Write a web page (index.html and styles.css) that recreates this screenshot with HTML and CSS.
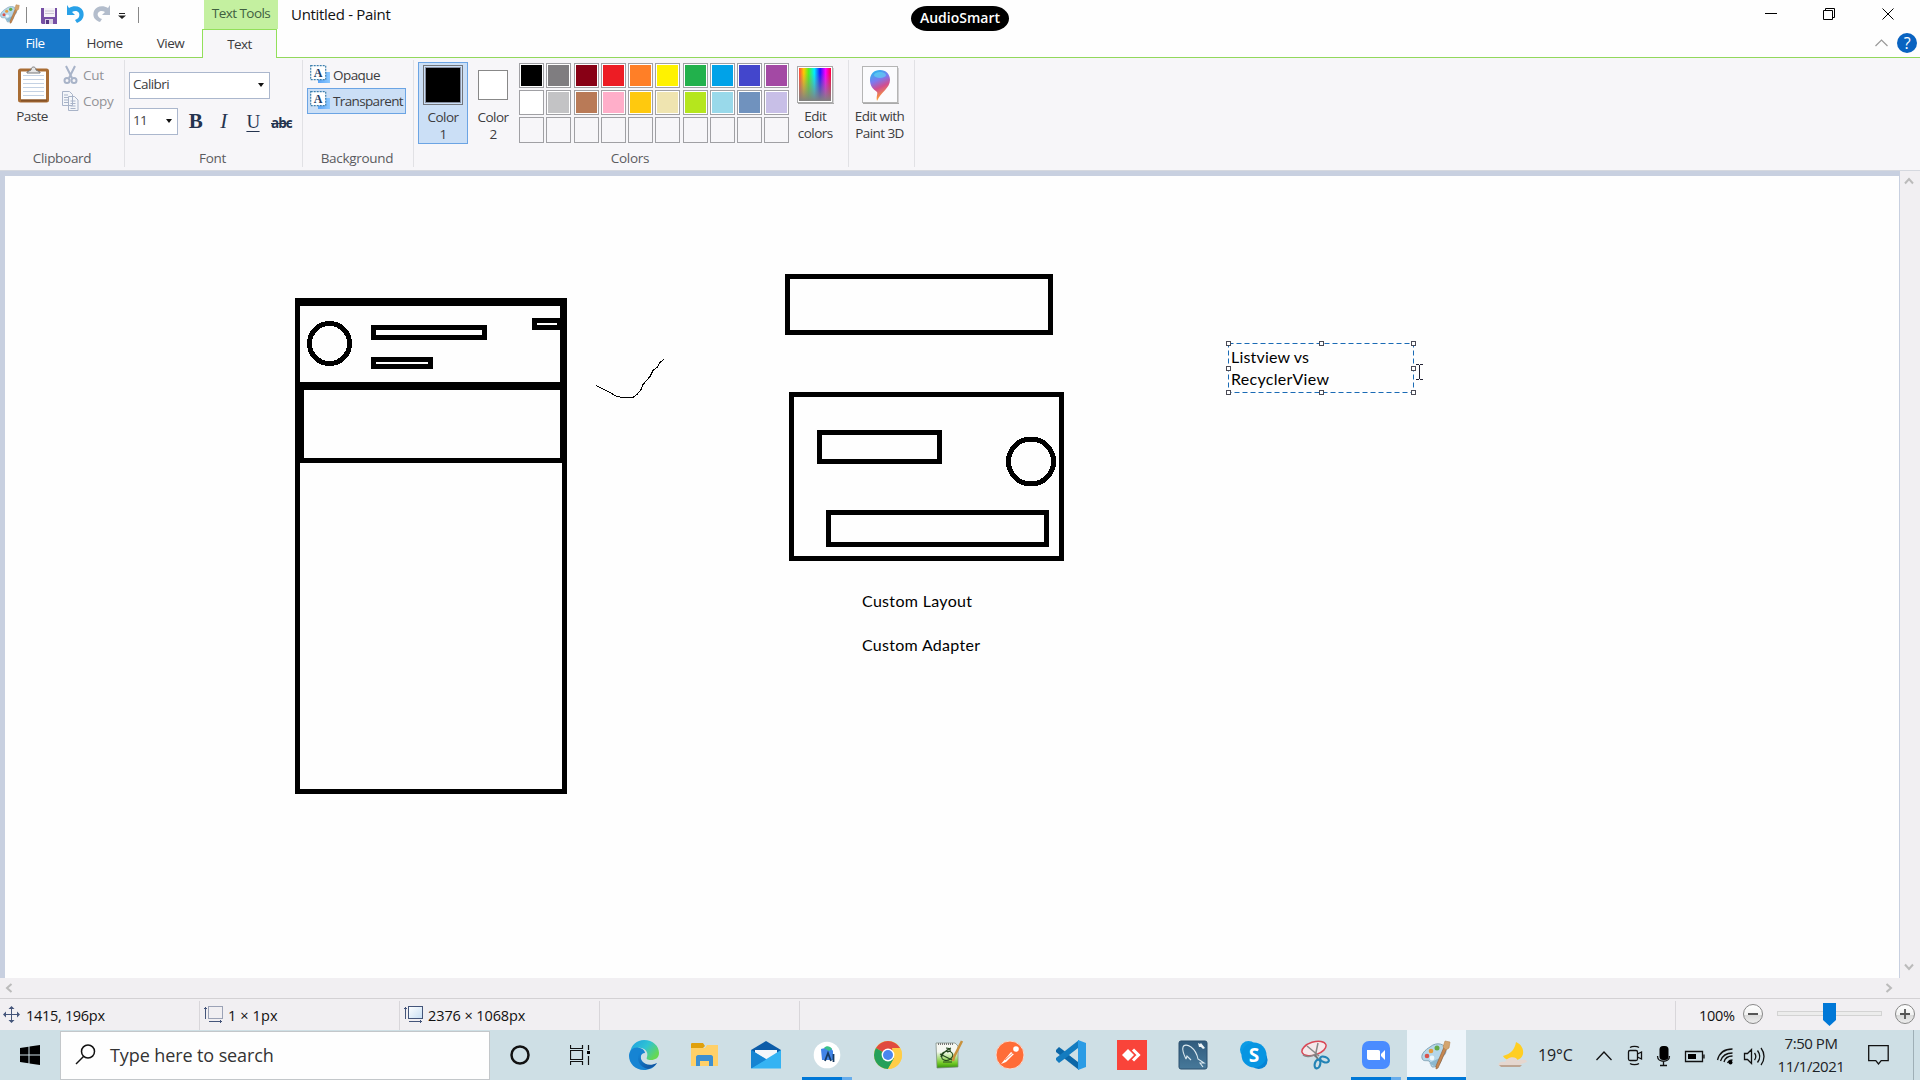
FILE: index.html
```html
<!DOCTYPE html>
<html lang="en">
<head>
<meta charset="utf-8">
<title>Untitled - Paint</title>
<link rel="stylesheet" href="styles.css">
</head>
<body>
<svg class="defs" width="0" height="0" aria-hidden="true">
  <defs>
    <symbol id="palette" viewBox="0 0 30 30">
      <path d="M9 7C16 1 25 4 25 11c0 4-3 4-4 7-1 5-4 9-9 9-3 0-1-4-4-6-3-1-6 1-7-3C0 14 4 10 9 7z" fill="#b5d7ea" stroke="#83a5b7"/>
      <path d="M8 23l5 3c5 0 7-5 8-9z" fill="#8db8ce"/>
      <circle cx="6" cy="16" r="2.3" fill="#d9544d"/><circle cx="10" cy="11" r="2.3" fill="#e79b3b"/>
      <circle cx="16" cy="8" r="2.5" fill="#65aa47"/><circle cx="11" cy="18" r="2.4" fill="#eef8fc"/>
      <path d="M26 8L17 28l-2 1 0-3 8-19z" fill="#c78850" stroke="#925a30" stroke-width=".6"/>
      <path d="M22 7l2-6 5 1-1 6-3 2z" fill="#d4a56f" stroke="#b98753" stroke-width=".6"/>
    </symbol>
    <symbol id="textbg" viewBox="0 0 20 20">
      <defs><linearGradient id="bl"><stop stop-color="#5aa4f7"/><stop offset="1" stop-color="#8cc9ff"/></linearGradient></defs>
      <rect x="8" y="7" width="12" height="11" fill="url(#bl)"/>
      <rect x=".7" y=".7" width="15" height="14" fill="#fff" stroke="#3e80ae" stroke-width="1.2" stroke-dasharray="2 1"/>
      <text x="8" y="12" class="glyph" text-anchor="middle">A</text>
    </symbol>
    <linearGradient id="spectrum"><stop stop-color="#f44"/><stop offset=".15" stop-color="#fc0"/><stop offset=".3" stop-color="#5e2"/><stop offset=".48" stop-color="#0ef"/><stop offset=".66" stop-color="#21f"/><stop offset=".83" stop-color="#f0f"/><stop offset="1" stop-color="#f03"/></linearGradient>
    <linearGradient id="grayfade" x2="0" y2="1"><stop offset=".15" stop-color="#888" stop-opacity="0"/><stop offset="1" stop-color="#808080"/></linearGradient>
    <linearGradient id="pin" x2=".3" y2="1"><stop stop-color="#18c4ee"/><stop offset=".4" stop-color="#7c79ef"/><stop offset=".65" stop-color="#d14d91"/><stop offset="1" stop-color="#ffa32c"/></linearGradient>
    <linearGradient id="edgeg" x2="1" y2=".6"><stop stop-color="#1d9de2"/><stop offset=".55" stop-color="#2fc3d4"/><stop offset="1" stop-color="#66d853"/></linearGradient>
    <linearGradient id="edgeb" x2="1" y2="1"><stop stop-color="#1287d8"/><stop offset="1" stop-color="#114a95"/></linearGradient>
    <linearGradient id="knob" x2="0" y2="1"><stop stop-color="#fff"/><stop offset=".55" stop-color="#f1f1f1"/><stop offset=".56" stop-color="#d9d9d9"/><stop offset="1" stop-color="#eee"/></linearGradient>
    <linearGradient id="page" x2="1" y2="1"><stop stop-color="#fff"/><stop offset="1" stop-color="#c7def3"/></linearGradient>
    <linearGradient id="npp" x2="0" y2="1"><stop offset=".35" stop-color="#f6f8f2"/><stop offset=".8" stop-color="#73cb25"/><stop offset="1" stop-color="#34930f"/></linearGradient>
    <linearGradient id="sea" x2="0" y2="1"><stop stop-color="#315b7d"/><stop offset="1" stop-color="#47799a"/></linearGradient>
  </defs>
</svg>

<header class="titlebar">
  <div class="quick">
    <svg class="q-palette" width="20" height="20"><use href="#palette"/></svg>
    <i class="q-sep"></i>
    <svg class="q-save" width="16" height="16" viewBox="0 0 16 16"><path d="M0 0h16v16H1l-1-1z" fill="#7650a5"/><path d="M3 0h11v9H3z" fill="#f5f2f7"/><path d="M4 3h9M4 5.5h9" stroke="#c9c4d2"/><path d="M4 11h8v5H4z" fill="#d9d1e3"/><path d="M5 12h3v4H5z" fill="#583884"/></svg>
    <svg class="q-undo" width="17" height="18" viewBox="0 0 17 18"><path d="M0 0l2 3c5-3 12-2 14 3 2 6-1 10-6 12l-2-3c4-1 5-4 4-7-2-3-5-2-7-1l3 3H0z" fill="#28a1e8"/></svg>
    <svg class="q-redo" width="17" height="18" viewBox="0 0 17 18"><path d="M17 0l-2 3C10 0 3 1 1 6c-2 6 1 9 6 11l2-3C5 13 4 10 5 8c2-3 5-2 7-1L9 10h8z" fill="#b3bdcc"/></svg>
    <svg class="q-more" width="8" height="6" viewBox="0 0 8 6"><path d="M1 .5h6" stroke="#222"/><path d="M0 2.5h8L4 6z" fill="#222"/></svg>
    <i class="q-sep"></i>
  </div>
  <div class="tools-tab">Text Tools</div>
  <div class="title">Untitled - Paint</div>
  <svg class="win-btns" width="130" height="14" viewBox="0 0 130 14"><g fill="none" stroke="#000"><path d="M0 6.5h12M58.500 3.500h9v9h-9zM60.500 3v-1.500h9v9h-1.500M117.500 1.500l11 11M128.500 1.500l-11 11"/></g></svg>
  <div class="pill">AudioSmart</div>
</header>

<nav class="tabs">
  <a class="tab file">File</a><a class="tab home">Home</a><a class="tab view">View</a><a class="tab text">Text</a>
  <div class="tab-fill">
    <svg width="13" height="8" viewBox="0 0 13 8"><path d="M.5 7l6-6 6 6" fill="none" stroke="#999" stroke-width="1.200"/></svg>
    <span class="help">?</span>
  </div>
</nav>

<section class="ribbon">
  <div class="group clipboard">
    <div class="body">
      <div class="paste">
        <svg width="31" height="37" viewBox="0 0 31 37"><rect x="1.500" y="4" width="28" height="31" rx="1" fill="#fff" stroke="#a96d35" stroke-width="3"/><path d="M3 34.500h26" stroke="#865329" stroke-width="2"/><path d="M5 9.500h21M5 13.500h21M5 17.500h21M5 21.500h21M5 25.500h21M5 29.500h21" stroke="#c4d2e4"/><path d="M9 6l4-2c0-4 5-4 5 0l4 2v1H9z" fill="#e5e5e5" stroke="#777"/></svg>
        <span>Paste</span>
      </div>
      <div class="cutcopy">
        <div class="row"><svg width="17" height="20" viewBox="0 0 17 20"><g fill="none" stroke="#a8b3c8" stroke-width="2"><path d="M4 1l6 12M13 1L7 13"/><circle cx="5" cy="15.500" r="2.500"/><circle cx="12" cy="15.500" r="2.500"/></g></svg><span>Cut</span></div>
        <div class="row"><svg width="17" height="20" viewBox="0 0 17 20"><g fill="#f4f6fa" stroke="#a8b3c8"><path d="M.5.5h7l3 3v11H.5zM6.500 5.500h6l3.500 3.500v10.500H6.500z"/><path d="M2 4h4M2 6.500h4M2 9h4M2 11.500h4M8.500 10h5M8.500 12.500h5M8.500 15h5M8.500 17.500h5"/></g></svg><span>Copy</span></div>
      </div>
    </div>
    <div class="caption">Clipboard</div>
  </div>

  <div class="group font">
    <div class="body">
      <div class="combo">Calibri<i></i></div>
      <div class="font-row">
        <div class="combo small">11<i></i></div>
        <b class="f-b">B</b><em class="f-i">I</em><u class="f-u">U</u><s class="f-s">abc</s>
      </div>
    </div>
    <div class="caption">Font</div>
  </div>

  <div class="group background">
    <div class="body">
      <div class="opt"><svg width="20" height="20"><use href="#textbg"/></svg>Opaque</div>
      <div class="opt on"><svg width="20" height="20"><use href="#textbg"/></svg>Transparent</div>
    </div>
    <div class="caption">Background</div>
  </div>

  <div class="group colors">
    <div class="body">
      <div class="slot on"><i class="big"></i>Color<br>1</div>
      <div class="slot second"><i class="big"></i>Color<br>2</div>
      <div class="swatches">
        <i class="c-black"></i><i class="c-gray"></i><i class="c-maroon"></i><i class="c-red"></i><i class="c-orange"></i><i class="c-yellow"></i><i class="c-green"></i><i class="c-sky"></i><i class="c-indigo"></i><i class="c-purple"></i>
        <i class="c-white"></i><i class="c-silver"></i><i class="c-brown"></i><i class="c-pink"></i><i class="c-gold"></i><i class="c-cream"></i><i class="c-lime"></i><i class="c-aqua"></i><i class="c-steel"></i><i class="c-lilac"></i>
        <i></i><i></i><i></i><i></i><i></i><i></i><i></i><i></i><i></i><i></i>
      </div>
      <div class="bigbtn edit">
        <svg width="37" height="38" viewBox="0 0 37 38"><rect x=".5" y=".5" width="35" height="36" fill="#fff" stroke="#a9a9a9"/><path d="M1 37.500h36V2" fill="none" stroke="#aaa"/><path d="M2 2h32v33H2z" fill="url(#spectrum)"/><path d="M2 2h32v33H2z" fill="url(#grayfade)"/></svg>
        <span>Edit<br>colors</span>
      </div>
    </div>
    <div class="caption">Colors</div>
  </div>

  <div class="group p3d">
    <div class="bigbtn">
      <svg width="37" height="38" viewBox="0 0 37 38"><rect x=".5" y=".5" width="35" height="36" fill="#fbfbfd" stroke="#b5b5b5"/><path d="M1 37.500h36V2" fill="none" stroke="#aaa"/><path d="M18 4c6 0 10 4 10 10 0 8-9 12-13 21-1-5 1-7 0-9-4-3-7-6-7-12S12 4 18 4z" fill="url(#pin)"/><ellipse cx="18" cy="9" rx="6" ry="3" fill="#5fdcf2" opacity=".6"/></svg>
      <span>Edit with<br>Paint 3D</span>
    </div>
  </div>
</section>

<main class="work">
  <svg class="canvas" width="1894" height="802" viewBox="5 176 1894 802">
    <g fill="#000" shape-rendering="crispEdges">
      <path d="M295 298h272v8H295zM295 298h5v496h-5zM560 298h7v165h-7zM562 463h5v331h-5zM295 789h272v5H295zM300 382h262v8H300zM300 388h4v72h-4zM295 458h272v5H295z"/>
    </g>
    <g fill="none" stroke="#000" stroke-width="5" shape-rendering="crispEdges">
      <rect x="373.500" y="327.500" width="111" height="10"/>
      <rect x="373.500" y="359.500" width="57" height="7"/>
      <rect x="534.500" y="320.500" width="25" height="7"/>
      <rect x="787.500" y="276.500" width="263" height="56"/>
      <rect x="791.500" y="394.500" width="270" height="164"/>
      <rect x="819.500" y="432.500" width="120" height="29"/>
      <rect x="828.500" y="512.500" width="218" height="32"/>
      <circle cx="329.500" cy="343.500" r="20"/>
      <circle cx="1031" cy="461.500" r="22.500"/>
    </g>
    <path d="M596 385.500l6 3 6 3 9 5 6 1h10l4-3 4-5 2-5 7-8 3-6 4-3 3-5 4-3" fill="none" stroke="#000" shape-rendering="crispEdges"/>
    <g class="ink">
      <text x="862" y="607" textLength="110">Custom Layout</text>
      <text x="862" y="651" textLength="118">Custom Adapter</text>
      <text x="1231" y="363" textLength="78">Listview vs</text>
      <text x="1231" y="385" textLength="98">RecyclerView</text>
    </g>
    <rect x="1228.500" y="343.500" width="185" height="49" fill="none" stroke="#1a6bb5" stroke-dasharray="5 3"/>
    <g fill="#fff" stroke="#4a4a55" shape-rendering="crispEdges">
      <path d="M1226.500 341.500h4v4h-4zM1319.500 341.500h4v4h-4zM1411.500 341.500h4v4h-4zM1226.500 366.500h4v4h-4zM1411.500 366.500h4v4h-4zM1226.500 390.500h4v4h-4zM1319.500 390.500h4v4h-4zM1411.500 390.500h4v4h-4z"/>
    </g>
    <path d="M1416 364.500h3M1420 364.500h3M1416 379.500h3M1420 379.500h3M1419.500 365v14" fill="none" stroke="#223"/>
  </svg>
  <div class="vscroll">
    <svg width="10" height="8" viewBox="0 0 10 8"><path d="M1 6.500l4-4.500 4 4.500" fill="none" stroke="#bbb" stroke-width="2"/></svg>
    <svg width="10" height="8" viewBox="0 0 10 8"><path d="M1 1.500L5 6l4-4.500" fill="none" stroke="#bbb" stroke-width="2"/></svg>
  </div>
</main>
<div class="hscroll">
  <svg width="8" height="10" viewBox="0 0 8 10"><path d="M6.500 1L2 5l4.500 4" fill="none" stroke="#bbb" stroke-width="2"/></svg>
  <svg width="8" height="10" viewBox="0 0 8 10"><path d="M1.500 1L6 5 1.500 9" fill="none" stroke="#bbb" stroke-width="2"/></svg>
</div>

<footer class="status">
  <div class="cell"><svg width="17" height="17" viewBox="0 0 17 17"><g stroke="#44557a" fill="#44557a"><path d="M8.500 1v15M1 8.500h15" fill="none"/><path stroke="none" d="M8.500 0l3 3h-6zM8.500 17l3-3h-6zM0 8.500l3-3v6zM17 8.500l-3-3v6z"/></g></svg><span class="st-pos">1415, 196px</span></div>
  <div class="cell"><svg width="19" height="17" viewBox="0 0 19 17"><g fill="none" stroke="#44557a"><path d="M1.500 1v12M5 15.500h13"/><path d="M0 2.500h3M16.500 14v3"/><rect x="4.500" y=".5" width="14" height="12" stroke-dasharray="1 1"/></g></svg><span class="st-sel">1 × 1px</span></div>
  <div class="cell"><svg width="19" height="17" viewBox="0 0 19 17"><g fill="none" stroke="#44557a"><path d="M1.500 1v12M5 15.500h13M0 2.500h3M16.500 14v3"/><rect x="4.500" y=".5" width="14" height="12" fill="url(#page)"/></g></svg><span class="st-size">2376 × 1068px</span></div>
  <div class="cell"></div>
  <div class="cell grow"></div>
  <div class="zoom">
    <span>100%</span>
    <svg width="174" height="26" viewBox="0 0 174 26">
      <rect x="35.500" y="9.500" width="104" height="4" fill="#ececec" stroke="#d3d3d3"/>
      <path d="M81 1h13v17l-6.500 6L81 18z" fill="#0078d7"/>
      <g stroke="#888" fill="url(#knob)"><circle cx="11" cy="12" r="9.500"/><circle cx="163" cy="12" r="9.500"/></g>
      <path d="M6 12h10M158 12h10M163 7v10" stroke="#555" stroke-width="1.800"/>
    </svg>
  </div>
</footer>

<footer class="taskbar">
  <div class="start"><svg width="20" height="20" viewBox="0 0 20 20"><path d="M0 3l8.500-1.200v7.700H0zM9.500 1.600L20 0v9.500H9.500zM0 10.500h8.500v7.700L0 17zM9.500 10.500H20V20L9.500 18.400z"/></svg></div>
  <div class="search"><svg width="21" height="21" viewBox="0 0 21 21"><g fill="none" stroke="#111" stroke-width="1.500"><circle cx="13" cy="7.500" r="6.500"/><path d="M8.500 12.500L1 20"/></g></svg><span>Type here to search</span></div>
  <div class="app sys"><svg width="22" height="22" viewBox="0 0 22 22"><circle cx="11" cy="11" r="8.500" fill="none" stroke="#111" stroke-width="2.500"/></svg></div>
  <div class="app sys tv"><svg width="21" height="20" viewBox="0 0 21 20"><path d="M.5 0v3.500h12V0M.5 20v-3.500h12V20M.5 5.500h12v9H.5zM18.500 0v5M18.500 11v9" fill="none" stroke="#111" stroke-width="1.200"/><path d="M17 6h3v3h-3z"/></svg></div>
  <div class="app"><svg width="30" height="30" viewBox="0 0 30 30"><path d="M1 13C2 5 8 0 15 0c9 0 15 6 15 13 0 5-4 7-8 7-4 0-5-1-4-3 2-6-4-10-9-9-4 0-7 2-8 5z" fill="url(#edgeg)"/><path d="M0 16C0 9 6 6 11 8c4 1 5 4 5 5-5 0-5 6-3 9 3 4 9 5 15 1-3 5-8 7-13 7C6 30 0 23 0 16z" fill="#1684d3"/><path d="M10 13c-3 6 0 14 9 16 4-1 7-3 9-6-6 3-12 2-15-2-2-3-2-6 0-8z" fill="url(#edgeb)"/></svg></div>
  <div class="app"><svg width="30" height="30" viewBox="0 0 30 30"><path d="M1 4c0-1 1-1 1-1h11l2 3-2 2H1z" fill="#e0a00c"/><path d="M1 8h14l2-3h11v21H1z" fill="#ffd068"/><path d="M6 26v-9c0-1 1-2 2-2h13c1 0 2 1 2 2v9h-4v-5h-9v5z" fill="#3c8fd1"/></svg></div>
  <div class="app"><svg width="30" height="30" viewBox="0 0 30 30"><path d="M0 10L15 1l15 9v5H0z" fill="#0c5ca8"/><path d="M4 10h22v10H4z" fill="#f4f6fa"/><path d="M0 10l20 12 10 6H0z" fill="#1291df"/><path d="M30 10L0 28.500h30z" fill="#35b3f3"/><path d="M0 10l15 9.500L0 28.500z" fill="#1684d2"/></svg></div>
  <div class="app run"><svg width="28" height="28" viewBox="0 0 28 28"><circle cx="14" cy="14" r="13.300" fill="#fff"/><path d="M8 8l4-1h6l2 3v9H9z" fill="#4285e8"/><path d="M11 7c2-2.500 6-2.500 8 1l-3 2z" fill="#39c08a"/><path d="M12 20l3-8 3 8M20.500 13v8" fill="none" stroke="#173b62" stroke-width="1.800"/></svg></div>
  <div class="app"><svg width="28" height="28" viewBox="0 0 28 28"><circle cx="14" cy="14" r="14" fill="#ffcd46"/><path d="M14 14L1.900 7A14 14 0 0 1 26.100 7z" fill="#e04a3f"/><path d="M14 14L1.900 7A14 14 0 0 0 14 28l6-10.500z" fill="#25a05a"/><path d="M26.100 7A14 14 0 0 1 14 28l6-10.500-2-10.500z" fill="#ffcd46"/><circle cx="14" cy="14" r="6.400" fill="#fff"/><circle cx="14" cy="14" r="5" fill="#4a86ef"/></svg></div>
  <div class="app"><svg width="30" height="30" viewBox="0 0 30 30"><path d="M2 3h19l3 3v21L3 28z" fill="url(#npp)" stroke="#78867b" stroke-width=".7"/><path d="M4 4h16" stroke="#777" stroke-dasharray="1 1" stroke-width="2"/><path d="M7 17c0-5 8-8 11-4s-4 9-8 7c-6-2 1-10 7-12M6 14l12 6M12 8c5 0 6 4 1 4M9 22h9" fill="none" stroke="#24471d" stroke-width="1.100"/><path d="M28 1l-8 16-1 4" fill="none" stroke="#c9923d" stroke-width="2.500"/></svg></div>
  <div class="app"><svg width="30" height="30" viewBox="0 0 30 30"><circle cx="15" cy="15" r="14" fill="#ff6c37" stroke="#f6d9cf" stroke-width="1"/><path d="M6 24l10-12 3 2-8 8z" fill="#fff"/><circle cx="21" cy="9" r="2.800" fill="#fff"/><path d="M10 20l9-8M18 13l3 3" stroke="#ff6c37" stroke-width=".8"/></svg></div>
  <div class="app"><svg width="30" height="30" viewBox="0 0 30 30"><path d="M0 10l3-3 20 15v8L0 12z" fill="#0b67a8"/><path d="M0 20l3 3L23 8V0L0 18z" fill="#147cc0"/><path d="M22 0l8 3v24l-8 3z" fill="#2b9ce5"/><path d="M22 8v14l-9-7z" fill="#cddfe5"/></svg></div>
  <div class="app"><svg width="30" height="30" viewBox="0 0 30 30"><path d="M0 0h30v30H0z" fill="#f9443a"/><path d="M5 15l6-6 6 6-6 6z" fill="#fff"/><path d="M16 9.500l5.500 5.500-5.500 5.500" fill="none" stroke="#fff" stroke-width="3"/></svg></div>
  <div class="app"><svg width="30" height="30" viewBox="0 0 30 30"><rect x="1" y="1" width="28" height="28" rx="2" fill="url(#sea)" stroke="#2c506e"/><path d="M8 19c-2-4-4-9-3-12 1-3 5-2 8 0 4 3 6 7 7 12l6 4-4 0 3 4M8 19l1-3 4 4" fill="none" stroke="#dce9ef" stroke-width="1.100"/><path d="M20 3l2 1 1-1 4 5-2 1-2-2-2 0z" fill="#eff5f7"/></svg></div>
  <div class="app"><svg width="30" height="30" viewBox="0 0 30 30"><rect x="1" y="1" width="17" height="17" rx="8.500" fill="#0c9be5"/><rect x="11" y="11" width="17.500" height="18" rx="8.500" fill="#0784d5"/><circle cx="15" cy="15" r="12.500" fill="#0795e2"/><text x="15" y="22" class="skype" text-anchor="middle">S</text></svg></div>
  <div class="app"><svg width="30" height="30" viewBox="0 0 30 30"><g fill="none"><ellipse cx="14" cy="8.500" rx="12.500" ry="6.500" transform="rotate(-18 14 8.500)" fill="#f5e9eb" stroke="#d94755" stroke-width="1.500"/><path d="M7 6l12 10M18 3l-3 14M3 15c4 3 10 1 14-2" stroke="#888" stroke-width="1.500"/><path d="M15 15l3 4" stroke="#777" stroke-width="2"/><ellipse cx="17.500" cy="24" rx="2.700" ry="4.500" transform="rotate(15 17.500 24)" stroke="#2283b5" stroke-width="2.200"/><ellipse cx="24.500" cy="19.500" rx="4.500" ry="2.600" transform="rotate(20 24.500 19.500)" stroke="#2283b5" stroke-width="2.200"/></g></svg></div>
  <div class="app run"><svg width="28" height="28" viewBox="0 0 28 28"><rect width="28" height="28" rx="7" fill="#4a8cff"/><path d="M5 9h11c2 0 2 1 2 2v8H8c-3 0-3-1-3-3zM19 13l4-4v10l-4-4z" fill="#fff"/></svg></div>
  <div class="app active"><svg width="30" height="30"><use href="#palette"/></svg></div>
  <div class="tray">
    <svg width="30" height="26" viewBox="0 0 30 26"><path d="M18 0c-1 7-5 12-13 14 3 6 18 7 20-2 1-5-2-10-7-12z" fill="#ffce22"/><path d="M1 24c-2-4 3-5 6-4 2-5 11-7 13-1 5-3 9-1 9 1-2 1-5 1-7 3z" fill="#e5d7cf"/><path d="M1 23h23l-2 2H3z" fill="#bda592"/></svg>
    <span class="temp">19°C</span>
    <svg class="t-glyphs" width="170" height="24" viewBox="1596 1042 170 24">
      <g fill="none" stroke="#111" stroke-width="1.300">
        <path d="M1597.500 1059l7.500-8 7.500 8"/>
        <rect x="1629.500" y="1049.500" width="9" height="10" rx="1.500"/><path d="M1638.500 1053l4-2v7l-4-2M1631 1046.500c2-1.500 7-1.500 9 0M1631 1062.500c2 1.500 7 1.500 9 0"/>
        <path d="M1658.500 1055c0 7 12 7 12 0M1664.500 1060v4M1661 1064.500h7"/>
        <path d="M1686.500 1050.500h17v10h-17zM1705 1053.500v4"/>
        <path d="M1718.500 1059c2-8 8-11 15-11M1721.500 1060c2-6 6-8 12-8M1725 1061c1-4 4-6 8.500-6M1728.500 1062c1-2 2-3 5-3"/>
        <path d="M1745.500 1052.500h3l4-4v14l-4-4h-3zM1755.500 1052c1.500 2 1.500 5 0 7M1758.500 1049.500c3 4 3 8 0 12M1762 1047c4 5 4 12 0 17"/>
      </g>
      <rect x="1660.500" y="1045" width="9" height="14" rx="3.500"/>
      <path d="M1689 1053h8v5h-8z"/><circle cx="1731.500" cy="1061.500" r="2"/>
    </svg>
    <div class="clock"><div>7:50 PM</div><div class="date">11/1/2021</div></div>
    <svg class="note" width="21" height="20" viewBox="0 0 21 20"><path d="M.7.700h19.500v15h-7L10.500 19l-2.700-3.300H.7z" fill="none" stroke="#111" stroke-width="1.300"/></svg>
    <i class="peek"></i>
  </div>
</footer>
</body>
</html>
```
FILE: styles.css
```css
* { box-sizing: border-box; }
body {
  margin: 0; width: 1920px; height: 1080px; overflow: hidden;
  font: 13.500px/17px "Open Sans", "Noto Sans", sans-serif; color: #3c3c40; background: #fefefe;
  letter-spacing: -0.550px;
}
.defs { position: absolute; }
svg { display: block; flex: none; }
i { font-style: normal; }

.titlebar { position: relative; display: flex; height: 29px; }
.quick { display: flex; width: 204px; height: 29px; }
.q-palette { margin-top: 4px; }
.q-sep { width: 1px; height: 16px; margin: 7px 0 0 6px; background: #888; }
.q-save { margin: 8px 0 0 14px; }
.q-undo { margin: 5px 0 0 10px; }
.q-redo { margin: 5px 0 0 9px; }
.q-more { margin: 13px 0 0 8px; }
.q-more + .q-sep { margin-left: 12px; }
.tools-tab { width: 74px; text-align: center; line-height: 26px; background: #c4f0a0; color: #3f6040; }
.title { margin-left: 13px; font-size: 15px; line-height: 28px; color: #111; letter-spacing: -0.300px; }
.win-btns { margin: 7px 25px 0 auto; }
.pill {
  position: absolute; left: 911px; top: 6px; width: 98px; height: 25px; border-radius: 16px / 12.5px;
  background: #000; color: #fff; text-align: center; font: 600 14px/24px "Open Sans", sans-serif; letter-spacing: 0;
}

.tabs { display: flex; height: 29px; line-height: 29px; text-align: center; }
.tab, .tab-fill { border-bottom: 1px solid #92d85c; }
.file { width: 70px; background: #1979ca; color: #fff; border-color: #50a0a8; }
.home { width: 69px; }
.view { width: 63px; }
.tab.text { width: 75px; border: 1px solid #92e05a; border-bottom: 0; background: #f7f6f9; line-height: 28px; }
.tab-fill { flex: 1; display: flex; justify-content: flex-end; align-items: flex-start; padding: 4px 3px 0 0; }
.tab-fill svg { margin: 6px 9px 0 0; }
.help { width: 20px; height: 20px; border-radius: 50%; background: #0963c1; color: #fff; font-size: 16px; line-height: 20px; }

.ribbon { display: flex; height: 113px; padding-top: 2px; background: #f7f6f9; border-bottom: 1px solid #d5d8df; }
.group { display: flex; flex-direction: column; height: 107px; border-right: 1px solid #e1e1e5; }
.group .body { height: 91px; }
.caption { padding-right: 2px; text-align: center; color: #5b5b60; letter-spacing: -0.300px; }
.clipboard { width: 125px; }
.clipboard .caption { padding-right: 0; }
.clipboard .body { display: flex; }
.paste { width: 62px; display: flex; flex-direction: column; align-items: center; padding: 6px 0 0 2px; }
.paste svg { margin: 0 0 5px 2px; }
.cutcopy { padding-top: 2px; }
.cutcopy .row { display: flex; align-items: center; gap: 4px; height: 26px; color: #929297; letter-spacing: -0.300px; }
.font { width: 178px; padding: 0 4px; }
.font .body { padding-top: 12px; }
.combo { display: flex; justify-content: space-between; align-items: center; width: 141px; height: 27px; padding: 0 5px 2px 3px; background: #fff; border: 1px solid #abb7cd; }
.combo i { border: 3px solid transparent; border-top: 4px solid #111; border-bottom: 0; margin-top: 1px; }
.combo.small { width: 49px; letter-spacing: -0.800px; }
.font-row { display: flex; align-items: center; height: 27px; margin-top: 9px; color: #25344f; font-family: "Liberation Serif", serif; }
.font-row .combo { font-family: "Open Sans", sans-serif; color: #444; }
.f-b { width: 35px; text-align: center; font-size: 21px; }
.f-i { width: 21px; text-align: center; font-size: 21px; }
.f-u { width: 38px; text-align: center; font-size: 19px; text-decoration-thickness: 1px; text-underline-offset: 3px; }
.f-s { width: 21px; margin: 3px 0 0 -1px; font: bold 13.500px "Open Sans", sans-serif; letter-spacing: -1px; }
.background { width: 111px; padding: 0 4px; }
.background .body { padding-top: 2px; }
.opt { display: flex; align-items: center; gap: 3px; height: 26px; width: 99px; padding-left: 2px; border: 1px solid transparent; white-space: nowrap; }
.opt.on { background: #cbdff6; border-color: #6ba4e4; letter-spacing: -0.650px; }
.glyph { font: bold 12px "Liberation Serif", serif; fill: #1f3b64; letter-spacing: 0; }
.colors { width: 435px; }
.colors .body { display: flex; padding: 2px 0 0 4px; }
.slot { width: 50px; height: 82px; border: 1px solid transparent; text-align: center; }
.slot.on { background: #cbdff6; border-color: #6ba4e4; }
.big { display: block; width: 40px; height: 40px; margin: 2px auto 4px; border: 1px solid #73767c; box-shadow: inset 0 0 0 1px #cbdff6, inset 0 0 0 2px #888fa0; background: #000; }
.second .big { width: 30px; height: 30px; margin: 7px auto 9px; background: #fff; border: 1px solid #888; box-shadow: none; }
.swatches { display: grid; grid-template-columns: repeat(10, 25px); grid-template-rows: 25px 25px 26px; gap: 2px 2.250px; margin: 1px 0 0 1px; }
.swatches i { border: 1px solid #a0a0a4; padding: 1px; background: #f7f6f9 content-box; box-shadow: inset 0 0 0 1px #f7f6f9; }
.swatches i[class] { box-shadow: inset 0 0 0 1px #fff; }
.bigbtn { display: flex; flex-direction: column; align-items: center; text-align: center; padding-top: 6px; }
.bigbtn svg { margin-bottom: 4px; }
.edit { margin-left: 5px; padding-top: 4px; width: 42px; }
.p3d { width: 66px; white-space: nowrap; }
.p3d svg { margin-left: -3px; }
.p3d span { margin-left: -4px; }
.swatches .c-black { background-color: #000; } .swatches .c-gray { background-color: #7f7d80; }
.swatches .c-maroon { background-color: #880015; } .swatches .c-red { background-color: #ed1c24; }
.swatches .c-orange { background-color: #ff7f27; } .swatches .c-yellow { background-color: #fff200; }
.swatches .c-green { background-color: #22b14c; } .swatches .c-sky { background-color: #00a2e8; }
.swatches .c-indigo { background-color: #4346cc; } .swatches .c-purple { background-color: #a349a4; }
.swatches .c-white { background-color: #fff; } .swatches .c-silver { background-color: #c3c3c5; }
.swatches .c-brown { background-color: #b97a57; } .swatches .c-pink { background-color: #ffaec9; }
.swatches .c-gold { background-color: #ffc90e; } .swatches .c-cream { background-color: #efe4b0; }
.swatches .c-lime { background-color: #b5e61d; } .swatches .c-aqua { background-color: #99d9ea; }
.swatches .c-steel { background-color: #7092be; } .swatches .c-lilac { background-color: #c8bfe7; }

.work { display: flex; justify-content: space-between; height: 807px; padding: 5px 0 0 5px; background: #c8d0e0; }
.canvas { background: #fefefe; }
.ink { font: 16px "Lato", sans-serif; fill: #000; letter-spacing: 0; }
.vscroll { display: flex; flex-direction: column; justify-content: space-between; align-items: center; width: 20px; margin-top: -5px; padding: 6px 2px 7px 0; background: #f1eff2; }
.hscroll { display: flex; justify-content: space-between; align-items: center; height: 20px; padding: 0 27px 1px 5px; background: #f1eff2; }
.status { display: flex; height: 32px; border-top: 1px solid #d3d1d4; background: #f1eff2; padding-top: 2px; color: #111; letter-spacing: -0.100px; }
.cell { display: flex; width: 200px; height: 29px; padding-left: 4px; gap: 5px; border-right: 1px solid #d8d6da; }
.cell svg { margin-top: 5px; }
.cell:first-child { padding-left: 3px; gap: 6px; }
.cell span, .zoom span { font-size: 14.500px; line-height: 30px; white-space: nowrap; }
.st-pos { letter-spacing: -0.300px; }
.st-sel { letter-spacing: 0.100px; }
.cell.grow { flex: 1; }
.zoom { display: flex; width: 244px; padding-left: 23px; }
.zoom span { width: 43px; letter-spacing: -0.300px; }
.zoom svg { margin-top: 1px; }

.taskbar { display: flex; height: 50px; background: #cedfe5; color: #1c2226; letter-spacing: -0.100px; }
.start { display: flex; width: 60px; align-items: center; justify-content: center; }
.search { display: flex; align-items: center; gap: 14px; width: 430px; height: 49px; margin-top: 1px; padding: 0 0 2px 14px; background: #fefefe; border: 1px solid #c3c7ca; }
.search span { font-size: 18px; line-height: 24px; color: #333; }
.app { display: flex; position: relative; width: 61px; align-items: center; justify-content: center; }
.app.sys { width: 60px; }
.app.tv { width: 63.500px; padding-right: 3px; }
.run { background: linear-gradient(90deg, #0078d7 40px, #67adec 40px) 5px 47px / 50px 3px no-repeat; }
.active { width: 59.500px; background: linear-gradient(#0078d7, #0078d7) 0 47px / 100% 3px no-repeat #eef5fa; }
.skype { font: bold 19px "Open Sans", sans-serif; fill: #fff; letter-spacing: 0; }
.tray { display: flex; flex: 1; align-items: center; padding-left: 32px; }
.temp { width: 57px; margin: 1px 0 0 10px; font-size: 16px; }
.t-glyphs { margin: -1px 4px 0 0; }
.clock { width: 84px; margin-top: -1px; text-align: center; font-size: 15px; line-height: 23px; letter-spacing: -0.450px; }
.note { margin: 0 0 0 15px; }
.peek { width: 1px; height: 50px; margin-left: 24px; background: #9fafb6; }
```
